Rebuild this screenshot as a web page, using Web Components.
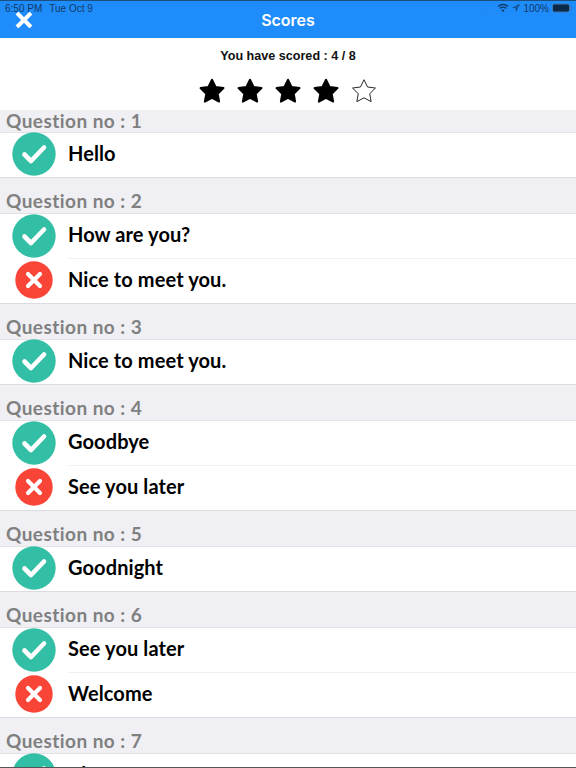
<!DOCTYPE html>
<html>
<head>
<meta charset="utf-8">
<title>Scores</title>
<style>
  html, body { margin: 0; padding: 0; height: 768px; overflow: hidden; background: #efeff4; }
  body { font-family: Lato, "Liberation Sans", sans-serif; }
</style>
</head>
<body>
<score-nav title-text="Scores"></score-nav>
<score-summary score="4" total="8"></score-summary>
<question-section number="1" first>
  <answer-row ok>Hello</answer-row>
</question-section>
<question-section number="2">
  <answer-row ok>How are you?</answer-row>
  <answer-row>Nice to meet you.</answer-row>
</question-section>
<question-section number="3">
  <answer-row ok>Nice to meet you.</answer-row>
</question-section>
<question-section number="4">
  <answer-row ok>Goodbye</answer-row>
  <answer-row>See you later</answer-row>
</question-section>
<question-section number="5">
  <answer-row ok>Goodnight</answer-row>
</question-section>
<question-section number="6">
  <answer-row ok>See you later</answer-row>
  <answer-row>Welcome</answer-row>
</question-section>
<question-section number="7">
  <answer-row ok>Cheers!</answer-row>
</question-section>
<screen-edge></screen-edge>

<script>
const navTpl = document.createElement('template')
navTpl.innerHTML = `
  <style>
    :host{
      display: block;
      position: relative;
      height: 38px;
      box-sizing: border-box;
      background: #1e8cfa;
      border-top: 1px solid #1b4f80;
      color: #fff;
      font-family: "Liberation Sans", Arial, sans-serif;
    }
    .bar{
      display: flex;
      justify-content: space-between;
      align-items: center;
      height: 14px;
      padding: 0 4px 0 5px;
      font-size: 10px;
      color: #123a66;
    }
    .group{ display: flex; align-items: center; gap: 7px; }
    .right{ gap: 3px; }
    .dots{ letter-spacing: 1px; color: #4a7fb5; font-size: 8px; }
    h1{
      margin: 0;
      position: absolute;
      left: 0;
      right: 0;
      top: 9px;
      text-align: center;
      font-family: Inter, "Liberation Sans", sans-serif;
      font-size: 16px;
      line-height: 20px;
      font-weight: 600;
      color: #fff;
    }
    .close{ position: absolute; left: 15px; top: 11px; }
    .batt{ display: block; }
  </style>
  <div class="bar">
    <div class="group"><span>6:50 PM</span><span>Tue Oct 9</span></div>
    <div class="group right">
      <span class="dots">....</span>
      <svg width="12" height="10" viewBox="0 0 12 10"><path d="M6 9 L4.4 7.2 A2.4 2.4 0 0 1 7.6 7.2 Z" fill="#123a66"/><path d="M2.8 5.5 A4.6 4.6 0 0 1 9.2 5.5 M1 3.5 A7.2 7.2 0 0 1 11 3.5" fill="none" stroke="#123a66" stroke-width="1.3"/></svg>
      <svg width="8" height="10" viewBox="1 0 8 10"><path d="M9 1 L1 4.8 H4.8 V9 Z M7 3 L3.6 4.2 H5.8 V6.2 Z" fill="#123a66" fill-rule="evenodd"/></svg>
      <span>100%</span>
      <svg class="batt" width="20" height="10" viewBox="0 0 20 10"><rect x="0.5" y="1" width="17" height="8" rx="2" fill="#0b2a4a" stroke="#3f77ad"/><rect x="18.5" y="3.5" width="1.2" height="3" fill="#3f77ad"/></svg>
    </div>
  </div>
  <h1></h1>
  <svg class="close" width="18" height="16" viewBox="0 0 18 16"><path d="M2 1 L16 15 M16 1 L2 15" stroke="#fff" stroke-width="4" stroke-linecap="butt"/></svg>
`
class ScoreNav extends HTMLElement {
  constructor() {
    super()
    this.attachShadow({ mode: 'open' })
    this.shadowRoot.appendChild(navTpl.content.cloneNode(true))
    this.shadowRoot.querySelector('h1').textContent = this.getAttribute('title-text')
  }
}
customElements.define('score-nav', ScoreNav)

const STAR = 'M12 1.6 L15.3 8.3 L22.6 9.3 L17.3 14.5 L18.6 21.8 L12 18.3 L5.4 21.8 L6.7 14.5 L1.4 9.3 L8.7 8.3 Z'
const summaryTpl = document.createElement('template')
summaryTpl.innerHTML = `
  <style>
    :host{
      display: flex;
      flex-direction: column;
      align-items: center;
      height: 72px;
      background: #fff;
      font-family: "Liberation Sans", Arial, sans-serif;
    }
    p{
      margin: 10px 0 0;
      font-size: 12.6px;
      line-height: 16px;
      font-weight: 700;
      color: #111;
    }
    .stars{ display: flex; gap: 12px; margin-top: 14px; }
    svg{ display: block; }
  </style>
  <p></p>
  <div class="stars"></div>
`
class ScoreSummary extends HTMLElement {
  constructor() {
    super()
    this.attachShadow({ mode: 'open' })
    this.shadowRoot.appendChild(summaryTpl.content.cloneNode(true))
    const score = +this.getAttribute('score')
    this.shadowRoot.querySelector('p').textContent = `You have scored : ${score} / ${this.getAttribute('total')}`
    let html = ''
    for (let i = 0; i < 5; i++) {
      const on = i < score
      html += `<svg width="26" height="26" viewBox="0 0 24 24"><path d="${STAR}" fill="${on ? '#000' : '#fff'}" stroke="${on ? '#000' : '#222'}" stroke-width="${on ? 1.8 : 0.9}" stroke-linejoin="round"/></svg>`
    }
    this.shadowRoot.querySelector('.stars').innerHTML = html
  }
}
customElements.define('score-summary', ScoreSummary)

const sectionTpl = document.createElement('template')
sectionTpl.innerHTML = `
  <style>
    :host{ display: block; }
    h2{
      margin: 0;
      height: 36px;
      box-sizing: border-box;
      padding: 12px 0 0 6px;
      font-family: Lato, "Liberation Sans", sans-serif;
      font-size: 19px;
      line-height: 22px;
      font-weight: 700;
      letter-spacing: 0.45px;
      color: #808080;
      background: #efeff4;
      border-bottom: 1px solid #e2e2e6;
    }
    :host([first]) h2{ height: 23px; padding-top: 0; }
    .rows{
      background: #fff;
      border-bottom: 1px solid #dcdce0;
    }
  </style>
  <h2></h2>
  <div class="rows"><slot></slot></div>
`
class QuestionSection extends HTMLElement {
  constructor() {
    super()
    this.attachShadow({ mode: 'open' })
    this.shadowRoot.appendChild(sectionTpl.content.cloneNode(true))
    this.shadowRoot.querySelector('h2').textContent = 'Question no : ' + this.getAttribute('number')
  }
}
customElements.define('question-section', QuestionSection)

const rowTpl = document.createElement('template')
rowTpl.innerHTML = `
  <style>
    :host{
      display: block;
      background: #fff;
    }
    .row{
      display: flex;
      align-items: center;
      height: 44px;
      padding-left: 12px;
    }
    :host(:not(:last-child)) .row{ height: 45px; }
    .icon{ width: 44px; display: flex; justify-content: center; flex: none; margin-top: -2px; }
    svg{ display: block; }
    .label{
      margin-left: 12px;
      flex: 1;
      align-self: stretch;
      display: flex;
      align-items: center;
      padding-bottom: 4px;
      box-sizing: border-box;
      font-family: Lato, "Liberation Sans", sans-serif;
      font-size: 20px;
      font-weight: 700;
      letter-spacing: 0.1px;
      color: #000;
    }
    :host(:not(:last-child)) .label{ border-bottom: 1px solid #efeff4; }
  </style>
  <div class="row">
    <div class="icon"></div>
    <div class="label"><slot></slot></div>
  </div>
`
class AnswerRow extends HTMLElement {
  constructor() {
    super()
    this.attachShadow({ mode: 'open' })
    this.shadowRoot.appendChild(rowTpl.content.cloneNode(true))
    this.shadowRoot.querySelector('.icon').innerHTML = this.hasAttribute('ok')
      ? `<svg width="44" height="44" viewBox="0 0 44 44"><circle cx="22" cy="22" r="21.7" fill="#33bfa5"/><path d="M12.5 22.5 L19 29 L32 15.5" fill="none" stroke="#fff" stroke-width="4.6" stroke-linecap="round" stroke-linejoin="round"/></svg>`
      : `<svg width="38" height="38" viewBox="0 0 38 38"><circle cx="19" cy="19" r="18.7" fill="#f94438"/><path d="M13 13 L25 25 M25 13 L13 25" fill="none" stroke="#fff" stroke-width="4.2" stroke-linecap="round"/></svg>`
  }
}
customElements.define('answer-row', AnswerRow)

class ScreenEdge extends HTMLElement {
  constructor() {
    super()
    this.attachShadow({ mode: 'open' }).innerHTML = `
      <style>
        :host{ display: block; position: fixed; left: 0; right: 0; bottom: 0; height: 1px; background: #555; }
      </style>`
  }
}
customElements.define('screen-edge', ScreenEdge)
</script>
</body>
</html>
